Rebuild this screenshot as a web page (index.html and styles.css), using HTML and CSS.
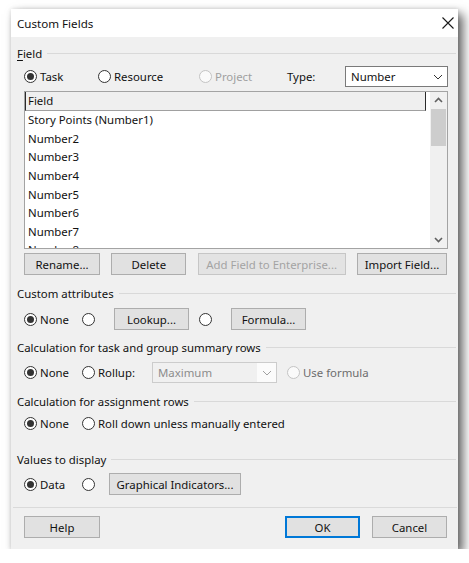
FILE: index.html
```html
<!DOCTYPE html>
<html lang="en">
<head>
    <meta charset="UTF-8">
    <meta name="viewport" content="width=device-width, initial-scale=1.0">
    <title>Custom Fields</title>
    <link rel="stylesheet" href="styles.css">
</head>
<body>
    <div class="dialog">
        <div class="titlebar">
            <span class="title">Custom Fields</span>
            <svg class="close" width="12" height="12" viewBox="0 0 12 12">
                <path d="M0.5 0.5L11.5 11.5M11.5 0.5L0.5 11.5" stroke="#1a1a1a" stroke-width="1.1" fill="none"/>
            </svg>
        </div>

        <div class="content">
            <!-- Field group -->
            <div class="legend legend-field"><span><u>F</u>ield</span></div>
            <div class="row row-type">
                <span class="opt opt-task"><span class="radio on"></span>Task</span>
                <span class="opt opt-resource"><span class="radio"></span>Resource</span>
                <span class="opt opt-project disabled"><span class="radio"></span>Project</span>
                <span class="type-label">Type:</span>
                <div class="combo combo-type">
                    <span>Number</span>
                    <svg width="10" height="6" viewBox="0 0 10 6"><path d="M1 1L5 5L9 1" stroke="#333" stroke-width="1" fill="none"/></svg>
                </div>
            </div>

            <div class="listbox">
                <div class="list">
                    <div class="list-head">Field</div>
                    <div class="list-item">Story Points (Number1)</div>
                    <div class="list-item">Number2</div>
                    <div class="list-item">Number3</div>
                    <div class="list-item">Number4</div>
                    <div class="list-item">Number5</div>
                    <div class="list-item">Number6</div>
                    <div class="list-item">Number7</div>
                    <div class="list-item">Number8</div>
                </div>
                <div class="scrollbar">
                    <svg class="arrow" width="17" height="17" viewBox="0 0 17 17"><path d="M5 10L8.5 6.5L12 10" stroke="#606060" stroke-width="1.6" fill="none"/></svg>
                    <div class="thumb"></div>
                    <div class="track"></div>
                    <svg class="arrow" width="17" height="17" viewBox="0 0 17 17"><path d="M5 7L8.5 10.5L12 7" stroke="#606060" stroke-width="1.6" fill="none"/></svg>
                </div>
            </div>

            <div class="btn-row">
                <button class="btn btn-rename">Rename...</button>
                <button class="btn btn-delete">Delete</button>
                <button class="btn btn-enterprise" disabled>Add Field to Enterprise...</button>
                <button class="btn btn-import">Import Field...</button>
            </div>

            <!-- Custom attributes -->
            <div class="legend legend-custom"><span>Custom attributes</span></div>
            <div class="row row-custom">
                <span class="opt opt-none"><span class="radio on"></span>None</span>
                <span class="opt opt-blank"><span class="radio"></span></span>
                <button class="btn btn-lookup">Lookup...</button>
                <span class="opt opt-blank"><span class="radio"></span></span>
                <button class="btn">Formula...</button>
            </div>

            <!-- Summary rows -->
            <div class="legend legend-summary"><span>Calculation for task and group summary rows</span></div>
            <div class="row row-summary">
                <span class="opt opt-none"><span class="radio on"></span>None</span>
                <span class="opt opt-rollup"><span class="radio"></span>Rollup:</span>
                <div class="combo combo-rollup">
                    <span>Maximum</span>
                    <span class="combo-btn">
                        <svg width="10" height="6" viewBox="0 0 10 6"><path d="M1 1L5 5L9 1" stroke="#a0a0a0" stroke-width="1" fill="none"/></svg>
                    </span>
                </div>
                <span class="opt opt-formula disabled-dark"><span class="radio"></span>Use formula</span>
            </div>

            <!-- Assignment rows -->
            <div class="legend legend-assign"><span>Calculation for assignment rows</span></div>
            <div class="row row-assign">
                <span class="opt opt-none"><span class="radio on"></span>None</span>
                <span class="opt"><span class="radio"></span>Roll down unless manually entered</span>
            </div>

            <!-- Values to display -->
            <div class="legend legend-values"><span>Values to display</span></div>
            <div class="row row-values">
                <span class="opt opt-none"><span class="radio on"></span>Data</span>
                <span class="opt opt-gi"><span class="radio"></span></span>
                <button class="btn btn-gi">Graphical Indicators...</button>
            </div>

            <div class="separator"></div>

            <div class="footer">
                <button class="btn btn-help">Help</button>
                <div class="spacer"></div>
                <button class="btn btn-ok">OK</button>
                <button class="btn btn-cancel">Cancel</button>
            </div>
        </div>
    </div>
</body>
</html>
```

FILE: styles.css
```css
body {
    margin: 0;
    background: #fff;
    font-family: "Noto Sans", "Open Sans", sans-serif;
    font-size: 11.4px;
    color: #111;
}
.dialog {
    width: 447px;
    height: 540px;
    margin: 9px 0 0 11px;
    background: #f0f0f0;
    box-shadow: 5px 5px 10px rgba(0, 0, 0, 0.62), 0 0 4px rgba(0, 0, 0, 0.12);
    display: flex;
    flex-direction: column;
}
.titlebar {
    height: 28px;
    background: #fff;
    display: flex;
    align-items: center;
    justify-content: space-between;
    padding: 0 4px 0 6px;
}
.title {
    font-size: 11.6px;
}
.content {
    flex: 1;
    display: flex;
    flex-direction: column;
}

/* group headings with the etched line */
.legend {
    height: 16px;
    display: flex;
    align-items: center;
    margin: 0 2px 0 6px;
}
.legend span {
    white-space: nowrap;
}
.legend::after {
    content: "";
    flex: 1;
    border-top: 1px solid #d9d9d9;
    margin-left: 5px;
}
.legend u {
    text-decoration-thickness: 1px;
    text-underline-offset: 2px;
}
.legend-field { margin-top: 8px; }
.legend-custom { margin-top: 10px; }
.legend-summary { margin-top: 9px; }
.legend-assign { margin-top: 10px; }
.legend-values { margin-top: 17px; }

.row {
    display: flex;
    align-items: center;
    height: 22px;
    margin: 0 10px 0 13px;
}
.row-type { margin-top: 5px; height: 21px; }
.row-custom { margin-top: 7px; }
.row-summary { margin-top: 7px; height: 21px; }
.row-assign { margin-top: 3px; }
.row-values { margin-top: 6px; }

/* radio buttons */
.opt {
    display: flex;
    align-items: center;
    white-space: nowrap;
}
.radio {
    width: 13px;
    height: 13px;
    box-sizing: border-box;
    border: 1px solid #333;
    border-radius: 50%;
    background: #fff;
    margin-right: 3px;
    display: flex;
    align-items: center;
    justify-content: center;
    flex-shrink: 0;
}
.radio.on::after {
    content: "";
    width: 7px;
    height: 7px;
    border-radius: 50%;
    background: #333;
}
.opt.disabled {
    color: #a0a0a0;
}
.opt.disabled .radio,
.opt.disabled-dark .radio {
    border-color: #c4c4c4;
    background: #fafafa;
}
.opt.disabled-dark {
    color: #6d6d6d;
}
.opt-task { width: 74px; }
.opt-resource { width: 101px; }
.opt-project { width: 88px; }
.opt-none { width: 58px; }
.opt-blank { width: 32px; }
.opt-rollup { width: 70px; }
.opt-gi { width: 27px; }
.type-label { width: 58px; }

/* combo boxes */
.combo {
    height: 21px;
    box-sizing: border-box;
    border: 1px solid #7a7a7a;
    background: #fff;
    display: flex;
    align-items: center;
    justify-content: space-between;
    padding: 0 4px 0 5px;
}
.combo-type { width: 103px; }
.combo-rollup {
    width: 125px;
    border-color: #cccccc;
    background: #f0f0f0;
    color: #8c8c8c;
    padding: 0 0 0 5px;
    margin-right: 10px;
}
.combo-btn {
    width: 19px;
    height: 19px;
    background: #fbfbfb;
    display: flex;
    align-items: center;
    justify-content: center;
}

/* field list */
.listbox {
    height: 158px;
    box-sizing: border-box;
    margin: 4px 10px 0 13px;
    border: 1px solid #a3a3a3;
    background: #fff;
    display: flex;
    overflow: hidden;
}
.list {
    flex: 1;
    overflow: hidden;
}
.list-head {
    height: 19px;
    box-sizing: border-box;
    margin-right: 4px;
    padding-left: 2px;
    background: #efefef;
    border-left: 1px solid #2b2b2b;
    border-right: 1px solid #2b2b2b;
    border-bottom: 1px solid #a0a0a0;
    line-height: 18px;
}
.list-item {
    height: 18.65px;
    line-height: 18.65px;
    padding-left: 3px;
    white-space: nowrap;
}
.scrollbar {
    width: 17px;
    background: #f0f0f0;
    display: flex;
    flex-direction: column;
}
.arrow {
    flex-shrink: 0;
}
.thumb {
    height: 37px;
    margin: 0 1px;
    background: #cdcdcd;
}
.track {
    flex: 1;
}

/* buttons */
.btn {
    height: 22px;
    box-sizing: border-box;
    border: 1px solid #adadad;
    background: #e1e1e1;
    font-family: inherit;
    font-size: inherit;
    color: #111;
    padding: 0;
    display: flex;
    align-items: center;
    justify-content: center;
    width: 75px;
}
.btn:disabled {
    color: #a3a3a3;
    border-color: #c6c6c6;
    background: #e3e3e3;
}
.btn-row {
    display: flex;
    justify-content: space-between;
    margin: 4px 11px 0 13px;
}
.btn-rename { width: 76px; }
.btn-enterprise { width: 148px; }
.btn-import { width: 90px; }
.btn-lookup { margin-right: 10px; }
.btn-gi { width: 132px; }
.btn-help { width: 76px; }
.btn-ok {
    border-color: #0078d7;
    box-shadow: inset 0 0 0 1px #0078d7;
    margin-right: 12px;
}

.separator {
    margin: 12px 1px 0 2px;
    border-top: 1px solid #dadada;
}
.footer {
    display: flex;
    margin: 8px 11px 0 13px;
}
.spacer {
    flex: 1;
}
```
